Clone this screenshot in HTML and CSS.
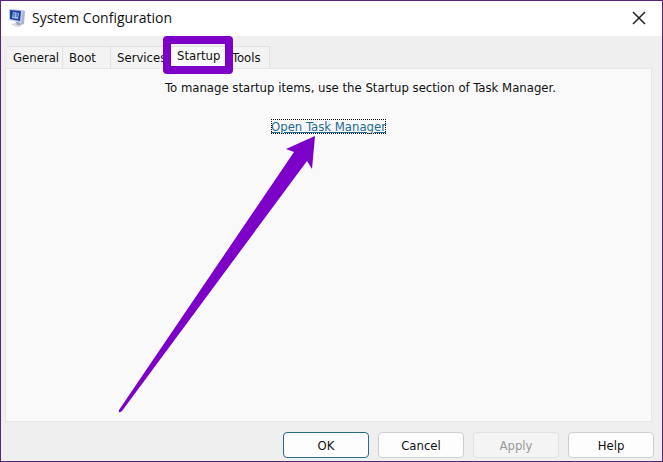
FILE: index.html
```html
<!DOCTYPE html>
<html lang="en">
  <head>
    <meta charset="UTF-8" />
    <meta name="viewport" content="width=device-width, initial-scale=1" />
    <title>System Configuration</title>
    <link rel="stylesheet" href="styles.css">
  </head>
  <body>
    <div class="window">
      <header class="titlebar">
        <svg class="app-icon" viewBox="0 0 18 20" aria-hidden="true">
          <path d="M3 16l8-2 5 2-5 3-5-1z" fill="#d3d5de" />
          <path d="M8 14l4 0 1 3-4 0z" fill="#9ba3bb" />
          <path d="M14 2l3 1-1 13-3 0z" fill="#aab3d0" />
          <path d="M1 1l14 1-2 13-12-3z" fill="#c2cdea" />
          <path d="M2 2l11 1-1 10-10-2z" fill="#1f419a" />
          <path d="M5 4l6 1-1 6-6-1z" fill="#9fb9ea" />
          <path d="M6 5v4M8 6h2M8 8h2" fill="none" stroke="#2d4f9f" />
        </svg>
        <h1>System Configuration</h1>
        <button class="close" type="button" aria-label="Close">
          <svg viewBox="0 0 14 14"><path d="M1 1l12 12M13 1L1 13" /></svg>
        </button>
      </header>

      <main class="content">
        <div class="tabs" role="tablist">
          <button class="tab general" type="button" role="tab">General</button>
          <button class="tab boot" type="button" role="tab">Boot</button>
          <button class="tab services" type="button" role="tab">Services</button>
          <button class="tab startup" type="button" role="tab" aria-selected="true">Startup</button>
          <button class="tab tools" type="button" role="tab">Tools</button>
        </div>
        <section class="panel" role="tabpanel">
          <p>To manage startup items, use the Startup section of Task Manager.</p>
          <div class="link-row">
            <a href="#">Open Task Manager</a>
            <svg class="arrow" viewBox="0 0 200 280" aria-hidden="true">
              <path d="M197 1L168 14L176 17L1 275Q0 279 4 276L189 26L194 34Z" />
            </svg>
          </div>
        </section>
      </main>

      <footer class="actions">
        <button class="default" type="button">OK</button>
        <button type="button">Cancel</button>
        <button type="button" disabled>Apply</button>
        <button type="button">Help</button>
      </footer>
    </div>
  </body>
</html>
```
FILE: styles.css
```css
* {
  box-sizing: border-box;
}
body {
  margin: 0;
  font-family: "DejaVu Sans Condensed", "Noto Sans", sans-serif;
  font-size: 13px;
  color: #111;
}
button {
  font: inherit;
  color: inherit;
}
.window {
  display: flex;
  flex-direction: column;
  min-height: 100vh;
  border: 1px solid #5c2475;
  background: #efefef;
}
.titlebar {
  display: flex;
  align-items: center;
  height: 35px;
  padding: 0 16px 2px 7px;
  background: #fff;
}
.app-icon {
  width: 18px;
  height: 20px;
}
.titlebar h1 {
  flex: 1;
  margin: 0 0 0 6px;
  font-family: "Open Sans", sans-serif;
  font-size: 14px;
  font-weight: 400;
}
.close {
  padding: 0;
  border: 0;
  background: none;
}
.close svg {
  display: block;
  width: 14px;
  height: 14px;
  fill: none;
  stroke: #222;
  stroke-width: 1.5;
}
.content {
  flex: 1;
  display: flex;
  flex-direction: column;
  padding: 10px 10px 0 4px;
}
.tabs {
  display: flex;
  padding-left: 2px;
}
.tab {
  height: 22px;
  padding: 0 0 0 6px;
  border: 1px solid #e2e2e2;
  border-width: 1px 1px 0 0;
  background: #f3f3f3;
  line-height: 20px;
  text-align: left;
  white-space: nowrap;
}
.general {
  width: 56px;
}
.boot {
  width: 48px;
}
.services {
  width: 54px;
}
.startup {
  position: relative;
  width: 61px;
  padding: 0 0 4px 12px;
  background: #f9f9f9;
  line-height: 16px;
}
/* highlighter frame round the selected tab */
.startup::after {
  content: "";
  position: absolute;
  inset: -11px -8px -6px -2px;
  border: 8px solid #7c00c8;
  border-radius: 4px;
}
.tools {
  width: 44px;
}
.panel {
  flex: 1;
  padding-top: 10px;
  border: 1px solid #e6e6e6;
  background: #f9f9f9;
  text-align: center;
}
.panel p {
  margin: 0 0 22px;
  padding-left: 64px;
  line-height: 18px;
}
.link-row {
  position: relative;
}
.panel a {
  color: #1d6a94;
  line-height: 16px;
  outline: 1px dotted #111;
  outline-offset: -1px;
}
.arrow {
  position: absolute;
  top: 16px;
  left: calc(50% - 211px);
  width: 200px;
  height: 280px;
  fill: #7c00c8;
}
.actions {
  display: flex;
  justify-content: flex-end;
  gap: 9px;
  padding: 10px 8px 3px;
}
.actions button {
  width: 86px;
  height: 26px;
  padding: 0;
  border: 1px solid #cfcfcf;
  border-radius: 4px;
  background: #fdfdfd;
}
.actions .default {
  border-color: #2b6a85;
}
.actions button:disabled {
  border-color: #e2e2e2;
  background: #f4f4f4;
  color: #999;
}
```
